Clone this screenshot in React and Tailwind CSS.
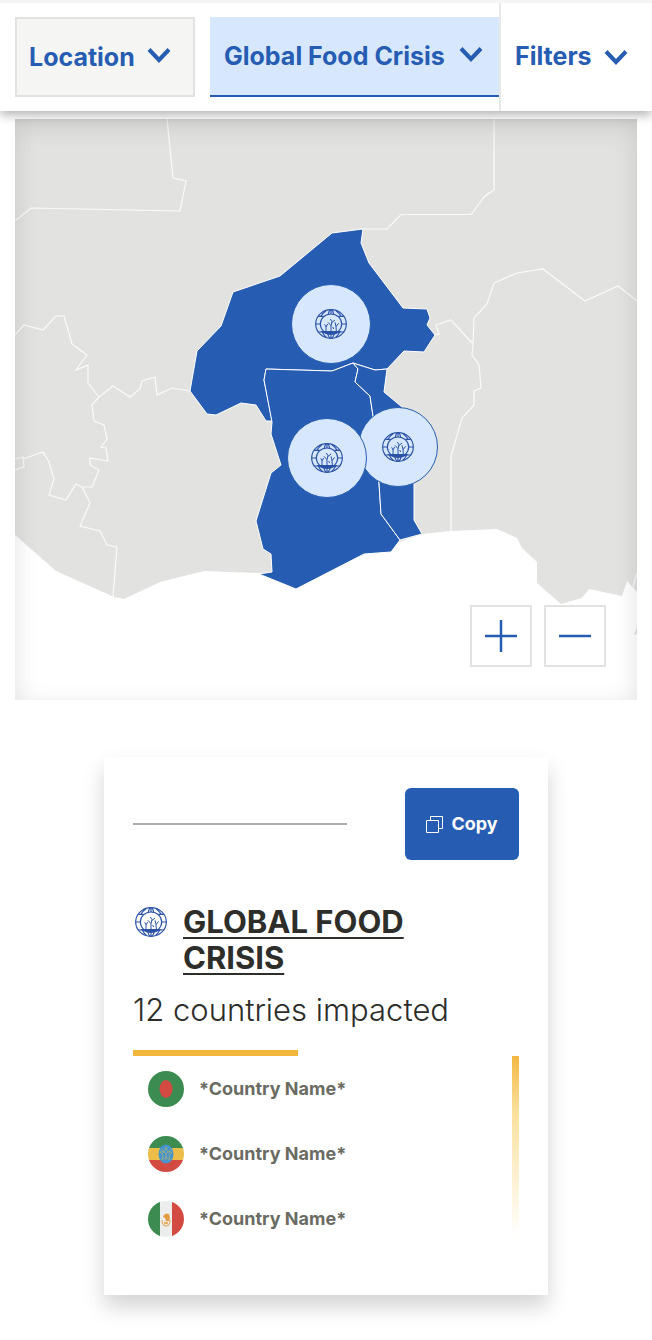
import React from 'react';

const LAND =
  'M15 119H637V592L627 581L622 596L589 589L582 598L561 604L537 583V562L522 548L517 538L497 529L451 531L422 534L296 580L258 573L204 571L160 582L124 599L114 597L56 571L15 535Z';

const BORDERS = [
  'M167 119L173 178L186 181L180 211L31 208L15 221',
  'M15 335L24 325L43 330L56 316H64L72 344L87 355L76 370L88 365V383L99 397L113 386L130 397L140 389L142 381L155 377L157 395L172 388L190 391',
  'M99 397L92 405L94 421L104 425L107 439L101 447L106 448L108 461L90 458V465L99 470L92 487H82L76 484L66 500L49 495L54 479L49 462L43 452L23 459',
  'M15 459L23 457L24 467L15 470',
  'M82 487L90 503L80 526L100 531L107 545L117 547L113 597',
  'M363 229H387L401 214.5H471L485 196L494 190V119',
  'M637 301L618 286L585 301L543 269L517 273L494 283L487 304L474 318L473 344L472 355L479 365L481 388L474 391V405L462 418L451 456V531',
  'M435 335L439 334L436 325L451 320L473 344',
  'M633 587L637 573',
];

const COUNTRIES = [
  'M332 233L363 229L361 243L369 263L403 308L427 309L430 318L427 325L435 335L424 352L404 351L387 369L375 370L353 363L332 371L266 369L264 380L272 421H266L256 405L241 403L216 415L207 414L190 391L197 351L221 326L233 292L280 276Z',
  'M353 363L358 369L355 382L370 396L373 416L379 483L381 514L400 540L391 552L364 554L296 589L259 574L272 572L271 554L263 549L256 521L271 473L281 465L271 434L272 422L264 380L266 369L332 371Z',
  'M353 363L375 370L387 369L384 392L402 407L414 420V520L422 534L400 540L381 514L379 483L373 416L370 396L355 382L358 369Z',
];

const MARKERS = [
  { x: 331, y: 324 },
  { x: 398, y: 447 },
  { x: 327, y: 458 },
];

function GlobeIcon(props) {
  return (
    <svg viewBox="0 0 96 90" fill="none" stroke="#2a52a5" strokeWidth="3.5" aria-hidden="true" {...props}>
      <ellipse cx="48" cy="45" rx="46" ry="43" />
      <ellipse cx="48" cy="45" rx="32" ry="30" />
      <path d="M10 22H26M70 22H86M2 45H16M80 45H94M8 69H88" />
      <path d="M48 2V15M33 5Q23 12 18 22M63 5Q73 12 78 22M40 15Q42 7 45 2M56 15Q54 7 51 2" />
      <path d="M22 69Q27 80 34 85M74 69Q69 80 62 85M38 74Q40 82 45 88M58 74Q56 82 51 88M48 74V88" />
      <path d="M22 68Q48 83 74 68Z" fill="#2a52a5" />
      <path
        strokeWidth="3"
        d="M33 68V53L29 46M33 54L38 45M48 68V50L39 40M48 50L51 38L46 30M50 41L60 33M64 68L63 52L60 40M63 53L71 43M56 60L53 54"
      />
    </svg>
  );
}

function Chevron({ className = '' }) {
  return (
    <svg viewBox="0 0 24 16" className={`pointer-events-none h-4 w-6 shrink-0 ${className}`} fill="none" aria-hidden="true">
      <path d="M2 2.5L12 13L22 2.5" stroke="#265db3" strokeWidth="4" />
    </svg>
  );
}

function Dropdown({ label, value, className, chevron }) {
  return (
    <div className={`relative h-20 min-w-0 ${className}`}>
      <select aria-label={label} className="h-full w-full appearance-none bg-transparent pt-0.5 outline-none">
        <option>{value}</option>
      </select>
      <Chevron className={`absolute top-1/2 -mt-2.5 ${chevron}`} />
    </div>
  );
}

function ZoomButton({ label, d }) {
  return (
    <button
      type="button"
      aria-label={label}
      className="flex size-[62px] items-center justify-center border-2 border-[#e2e3e1] bg-white"
    >
      <svg viewBox="0 0 32 32" className="size-8" fill="none">
        <path d={d} stroke="#265db3" strokeWidth="2.5" />
      </svg>
    </button>
  );
}

function CrisisMap() {
  return (
    <section aria-label="Map" className="relative mx-[15px] mt-2">
      <svg viewBox="15 119 622 581" className="block w-full">
        <path d={LAND} fill="#e2e3e1" />
        <path d="M637 627L634 635L637 634Z" fill="#e2e3e1" />
        <g fill="none" stroke="#fafafa" strokeWidth="1.2">
          {BORDERS.map((d) => (
            <path key={d} d={d} />
          ))}
        </g>
        <g fill="#265db3" stroke="#fff" strokeWidth="1" strokeLinejoin="round">
          {COUNTRIES.map((d) => (
            <path key={d} d={d} />
          ))}
        </g>
        {MARKERS.map(({ x, y }) => (
          <g key={x}>
            <circle cx={x} cy={y} r="39.5" fill="#d7e7fe" stroke="#265db3" />
            <GlobeIcon x={x - 16} y={y - 15} width="32" height="30" />
          </g>
        ))}
      </svg>
      <div className="pointer-events-none absolute inset-0 shadow-[inset_0_6px_24px_rgba(0,0,0,0.12)]" />
      <div className="absolute right-[31px] bottom-[33px] flex gap-3">
        <ZoomButton label="Zoom in" d="M16 32V0M0 16H32" />
        <ZoomButton label="Zoom out" d="M0 16H32" />
      </div>
    </section>
  );
}

function Flag({ type }) {
  return (
    <svg viewBox="0 0 36 36" className="size-9 shrink-0 overflow-hidden rounded-full" aria-hidden="true">
      {type === 'bangladesh' && (
        <>
          <path d="M0 0H36V36H0Z" fill="#3c8b50" />
          <ellipse cx="18" cy="18" rx="6.5" ry="9" fill="#d34a42" />
        </>
      )}
      {type === 'ethiopia' && (
        <>
          <path d="M0 0H36V12H0Z" fill="#3c8b50" />
          <path d="M0 12H36V24H0Z" fill="#ecbd48" />
          <path d="M0 24H36V36H0Z" fill="#d34a42" />
          <ellipse cx="18" cy="18" rx="7.5" ry="9.5" fill="#4595cf" />
          <path
            d="M18 11L20 16L24 16L21 19L22 24L18 21L14 24L15 19L12 16L16 16ZM18 18V24M18 18L23 13M18 18L13 13"
            fill="none"
            stroke="#b9b368"
            strokeWidth="0.7"
          />
        </>
      )}
      {type === 'mexico' && (
        <>
          <path d="M0 0H12V36H0Z" fill="#3c8b50" />
          <path d="M12 0H24V36H12Z" fill="#eceeed" />
          <path d="M24 0H36V36H24Z" fill="#d34a42" />
          <path d="M16 14L18 12.5L21 13L22 17L21 20L18 20L17 17L15 16Z" fill="#e39c43" />
          <path
            d="M14 19Q14 25 18 25Q22 25 22 19M16 21L20 23M20 21L16 23"
            fill="none"
            stroke="#e39c43"
          />
        </>
      )}
    </svg>
  );
}

function CrisisCard() {
  return (
    <article className="mx-auto mt-[57px] max-w-[444px] bg-white px-[29px] pt-[31px] pb-[58px] shadow-[0_12px_20px_rgba(0,0,0,0.17)]">
      <div className="flex items-center justify-between">
        <div className="h-0.5 w-[214px] bg-[#adaea9]" />
        <button
          type="button"
          className="flex h-[72px] w-[114px] items-center justify-center gap-2 rounded-md bg-[#265db3] text-lg font-bold text-white"
        >
          <svg viewBox="0 0 17 17" className="size-[17px]" fill="none" stroke="#fff" aria-hidden="true">
            <path d="M.5 4.5H12.5V16.5H.5ZM4.5 4.5V.5H16.5V12.5H12.5" />
          </svg>
          Copy
        </button>
      </div>

      <div className="mt-11 flex items-start gap-4 text-[#2d2d2a]">
        <GlobeIcon className="mt-[3px] ml-0.5 h-[30px] w-8 shrink-0" />
        <h2 className="w-[240px] text-[31px] leading-9 font-bold">
          <a href="#global-food-crisis" className="underline decoration-2 underline-offset-4">
            GLOBAL FOOD CRISIS
          </a>
        </h2>
      </div>
      <p className="mt-4 text-[31px] leading-9 font-light text-[#2d2d2a]">12 countries impacted</p>
      <div className="mt-[22px] h-1.5 w-[165px] bg-[#f3b73e]" />

      <div className="flex justify-between">
        <ul className="mt-[15px] ml-[15px] flex flex-col gap-[29px]">
          {['bangladesh', 'ethiopia', 'mexico'].map((type) => (
            <li key={type} className="flex items-center gap-[15px] text-lg font-bold text-[#6a6b62]">
              <Flag type={type} />
              *Country Name*
            </li>
          ))}
        </ul>
        <div className="w-[7px] bg-linear-to-b from-[#f3b73e] via-[#fae09a] via-30% to-white" />
      </div>
    </article>
  );
}

export default function App() {
  return (
    <div className="min-h-screen bg-white pb-11 font-['Inter',sans-serif]">
      <div className="relative z-20 h-[3px] bg-[#f5f5f5]" />
      <header className="relative z-10 grid grid-cols-[195fr_289fr_153fr] items-center bg-white pl-[15px] text-[25px] font-bold text-[#265db3] shadow-[0_4px_10px_rgba(0,0,0,0.3)]">
        <Dropdown
          label="Location"
          value="Location"
          className="my-[14px] mr-[15px] border-2 border-[#e2e3e1] bg-[#f5f5f3] pl-3"
          chevron="right-[22px]"
        />
        <Dropdown
          label="Crisis"
          value="Global Food Crisis"
          className="my-[14px] border-b-2 border-[#265db3] bg-[#d7e7fe] pl-[14px]"
          chevron="right-4"
        />
        <button
          type="button"
          className="flex h-full items-center justify-between border-l-2 border-[#e8e8e8] pr-6 pl-[14px]"
        >
          Filters
          <Chevron />
        </button>
      </header>
      <main>
        <CrisisMap />
        <CrisisCard />
      </main>
    </div>
  );
}
